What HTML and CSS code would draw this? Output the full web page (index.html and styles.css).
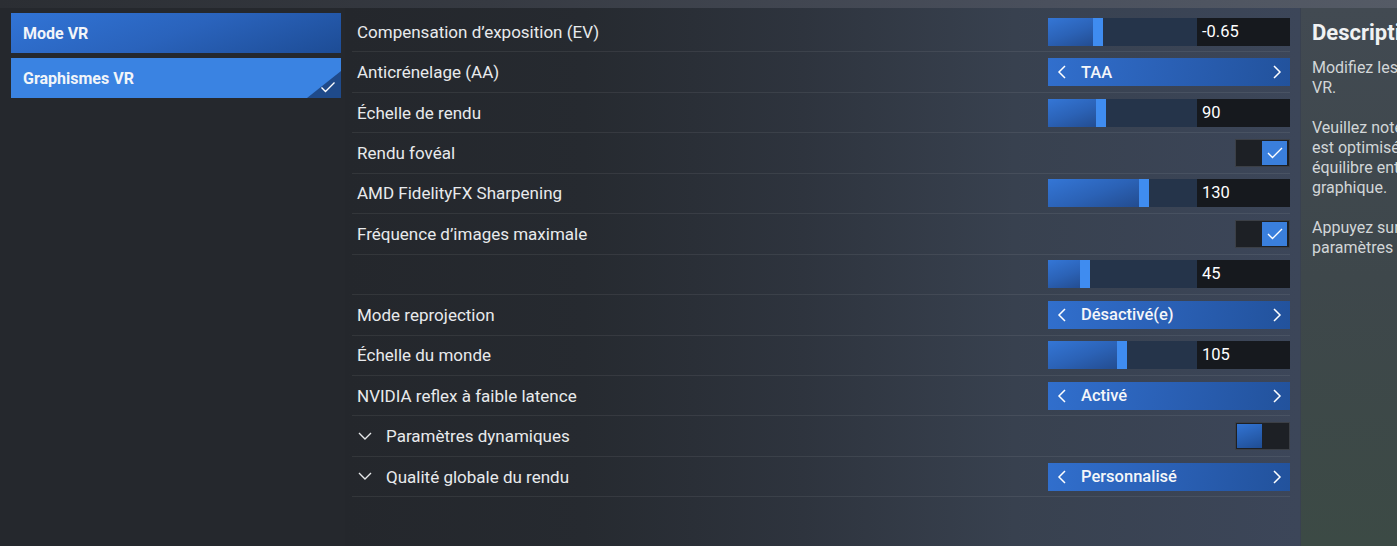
FILE: index.html
```html
<!DOCTYPE html>
<html lang="fr">
  <head>
    <meta charset="utf-8">
    <title>Graphismes VR</title>
    <link rel="stylesheet" href="styles.css">
  </head>
  <body>
    <div class="topbar"></div>
    <div class="layout">
      <!-- MENU -->
      <div class="sidebar">
        <div class="tab tab-mode">Mode VR</div>
        <div class="tab tab-active">
          Graphismes VR
          <span class="tab-corner">
            <svg width="16" height="12" viewBox="0 0 16 12"><path d="M1.5 6.5 L5.5 10.5 L14.5 1.5" fill="none" stroke="#fff" stroke-width="1.4"/></svg>
          </span>
        </div>
      </div>

      <!-- SETTINGS -->
      <div class="main">
        <div class="row">
          <span class="label">Compensation d’exposition (EV)</span>
          <div class="slider">
            <div class="track"><div class="fill" style="width:55px"></div></div>
            <div class="value">-0.65</div>
          </div>
        </div>
        <div class="row">
          <span class="label">Anticrénelage (AA)</span>
          <div class="select">
            <svg class="chev" width="10" height="14" viewBox="0 0 10 14"><path d="M8 1 L2 7 L8 13" fill="none" stroke="#fff" stroke-width="1.5"/></svg>
            <span class="select-text">TAA</span>
            <svg class="chev chev-right" width="10" height="14" viewBox="0 0 10 14"><path d="M2 1 L8 7 L2 13" fill="none" stroke="#fff" stroke-width="1.5"/></svg>
          </div>
        </div>
        <div class="row">
          <span class="label">Échelle de rendu</span>
          <div class="slider">
            <div class="track"><div class="fill" style="width:58px"></div></div>
            <div class="value">90</div>
          </div>
        </div>
        <div class="row">
          <span class="label">Rendu fovéal</span>
          <div class="toggle">
            <span class="knob knob-on">
              <svg width="16" height="12" viewBox="0 0 16 12"><path d="M1 6 L5.5 10.5 L15 1" fill="none" stroke="#fff" stroke-width="1.4"/></svg>
            </span>
          </div>
        </div>
        <div class="row">
          <span class="label">AMD FidelityFX Sharpening</span>
          <div class="slider">
            <div class="track"><div class="fill" style="width:101px"></div></div>
            <div class="value">130</div>
          </div>
        </div>
        <div class="row">
          <span class="label">Fréquence d’images maximale</span>
          <div class="toggle">
            <span class="knob knob-on">
              <svg width="16" height="12" viewBox="0 0 16 12"><path d="M1 6 L5.5 10.5 L15 1" fill="none" stroke="#fff" stroke-width="1.4"/></svg>
            </span>
          </div>
        </div>
        <div class="row">
          <span class="label"></span>
          <div class="slider">
            <div class="track"><div class="fill" style="width:42px"></div></div>
            <div class="value">45</div>
          </div>
        </div>
        <div class="row">
          <span class="label">Mode reprojection</span>
          <div class="select">
            <svg class="chev" width="10" height="14" viewBox="0 0 10 14"><path d="M8 1 L2 7 L8 13" fill="none" stroke="#fff" stroke-width="1.5"/></svg>
            <span class="select-text">Désactivé(e)</span>
            <svg class="chev chev-right" width="10" height="14" viewBox="0 0 10 14"><path d="M2 1 L8 7 L2 13" fill="none" stroke="#fff" stroke-width="1.5"/></svg>
          </div>
        </div>
        <div class="row">
          <span class="label">Échelle du monde</span>
          <div class="slider">
            <div class="track"><div class="fill" style="width:79px"></div></div>
            <div class="value">105</div>
          </div>
        </div>
        <div class="row">
          <span class="label">NVIDIA reflex à faible latence</span>
          <div class="select">
            <svg class="chev" width="10" height="14" viewBox="0 0 10 14"><path d="M8 1 L2 7 L8 13" fill="none" stroke="#fff" stroke-width="1.5"/></svg>
            <span class="select-text">Activé</span>
            <svg class="chev chev-right" width="10" height="14" viewBox="0 0 10 14"><path d="M2 1 L8 7 L2 13" fill="none" stroke="#fff" stroke-width="1.5"/></svg>
          </div>
        </div>
        <div class="row">
          <svg class="expand" width="14" height="9" viewBox="0 0 14 9"><path d="M1 1 L7 7 L13 1" fill="none" stroke="#e6e8ea" stroke-width="1.4"/></svg>
          <span class="label">Paramètres dynamiques</span>
          <div class="toggle toggle-off">
            <span class="knob knob-off"></span>
          </div>
        </div>
        <div class="row">
          <svg class="expand" width="14" height="9" viewBox="0 0 14 9"><path d="M1 1 L7 7 L13 1" fill="none" stroke="#e6e8ea" stroke-width="1.4"/></svg>
          <span class="label">Qualité globale du rendu</span>
          <div class="select">
            <svg class="chev" width="10" height="14" viewBox="0 0 10 14"><path d="M8 1 L2 7 L8 13" fill="none" stroke="#fff" stroke-width="1.5"/></svg>
            <span class="select-text">Personnalisé</span>
            <svg class="chev chev-right" width="10" height="14" viewBox="0 0 10 14"><path d="M2 1 L8 7 L2 13" fill="none" stroke="#fff" stroke-width="1.5"/></svg>
          </div>
        </div>
      </div>

      <!-- DESCRIPTION -->
      <div class="desc">
        <h2 class="desc-title">Description</h2>
        <p>Modifiez les paramètres graphiques de la<br>VR.</p>
        <p>Veuillez noter que la configuration par défaut<br>est optimisée pour offrir le meilleur<br>équilibre entre performances et qualité<br>graphique.</p>
        <p>Appuyez sur F pour réinitialiser les<br>paramètres par défaut.</p>
      </div>
    </div>
  </body>
</html>
```

FILE: styles.css
```css
html,
body {
  margin: 0;
  width: 1397px;
  height: 546px;
  overflow: hidden;
}
body {
  background: #25282d;
  font-family: Roboto, "Liberation Sans", sans-serif;
  color: #e6e8ea;
}
.topbar {
  height: 8px;
  background: linear-gradient(to right, #2b2e33 0%, #363a42 35%, #4a505d 75%, #555b66 100%);
}
.layout {
  display: flex;
  height: 538px;
}

/* left menu */
.sidebar {
  flex: 0 0 330px;
  padding: 5px 4px 0 11px;
  background: #25282d;
  display: flex;
  flex-direction: column;
  gap: 5px;
}
.tab {
  position: relative;
  height: 40px;
  display: flex;
  align-items: center;
  padding-left: 12px;
  font-size: 16px;
  font-weight: 700;
  color: #f2f5f9;
}
.tab-mode {
  background: linear-gradient(160deg, #3174d6 0%, #2a63bc 50%, #1d4c95 100%);
}
.tab-active {
  background: #3a83e2;
  overflow: hidden;
}
.tab-corner {
  position: absolute;
  right: 0;
  bottom: 0;
  width: 34px;
  height: 27px;
  background: #1f4a8a;
  clip-path: polygon(100% 0, 100% 100%, 0 100%);
}
.tab-corner svg {
  position: absolute;
  right: 5px;
  bottom: 5px;
}

/* settings list */
.main {
  flex: 0 0 938px;
  padding: 4px 10px 0 7px;
  background: linear-gradient(to right, #24272c 0%, #262a30 25%, #2e343e 48%, #38414f 70%, #3c4659 100%);
}
.row {
  box-sizing: border-box;
  height: 40.45px;
  display: flex;
  align-items: center;
  border-bottom: 1px solid rgba(255, 255, 255, 0.07);
}
.label {
  padding-left: 5px;
  font-size: 17px;
  color: #e8eaec;
}
.expand {
  margin: 0 10px 0 6px;
}
.expand + .label {
  padding-left: 4px;
}

/* slider */
.slider {
  margin-left: auto;
  width: 242px;
  height: 28px;
  display: flex;
}
.track {
  position: relative;
  width: 149px;
  background: #25344a;
}
.fill {
  position: absolute;
  left: 0;
  top: 0;
  bottom: 0;
  background: linear-gradient(160deg, #3476d6 0%, #2b62b6 50%, #22498a 100%);
}
.fill::after {
  content: "";
  position: absolute;
  right: 0;
  top: 0;
  bottom: 0;
  width: 10px;
  background: #3f8cf0;
}
.value {
  flex: 1;
  background: #16191e;
  padding-left: 5px;
  font-size: 16.5px;
  line-height: 28px;
  color: #fff;
}

/* selector */
.select {
  margin-left: auto;
  width: 242px;
  height: 28px;
  box-sizing: border-box;
  padding: 0 8px 0 9px;
  display: flex;
  align-items: center;
  background: linear-gradient(100deg, #316fcd 0%, #2a60b5 50%, #22529c 100%);
}
.chev-right {
  margin-left: auto;
}
.select-text {
  margin-left: 14px;
  font-size: 16.5px;
  font-weight: 500;
  color: #f4f6f9;
}

/* toggle */
.toggle {
  margin-left: auto;
  width: 55px;
  height: 28px;
  box-sizing: border-box;
  border: 1px solid #3b3f46;
  background: #1d2025;
  display: flex;
  justify-content: flex-end;
  align-items: center;
  padding: 0 2px;
}
.toggle-off {
  justify-content: flex-start;
  padding: 0 1px;
}
.knob {
  width: 25px;
  height: 24px;
  display: flex;
  align-items: center;
  justify-content: center;
}
.knob-on {
  background: #3a7fdc;
}
.knob-off {
  background: linear-gradient(160deg, #3274d4, #1f4d93);
}

/* description */
.desc {
  flex: 0 0 400px;
  padding: 4px 0 0 11px;
  border-left: 1px solid #394150;
  background: linear-gradient(to bottom, #424a52 0%, #3e474b 50%, #3c4a45 100%);
  color: #d2d6d8;
  white-space: nowrap;
}
.desc-title {
  margin: 8px 0 13px;
  font-size: 22px;
  font-weight: 700;
  color: #f0f2f3;
}
.desc p {
  margin: 0 0 20px;
  font-size: 16px;
  line-height: 20px;
}
```
